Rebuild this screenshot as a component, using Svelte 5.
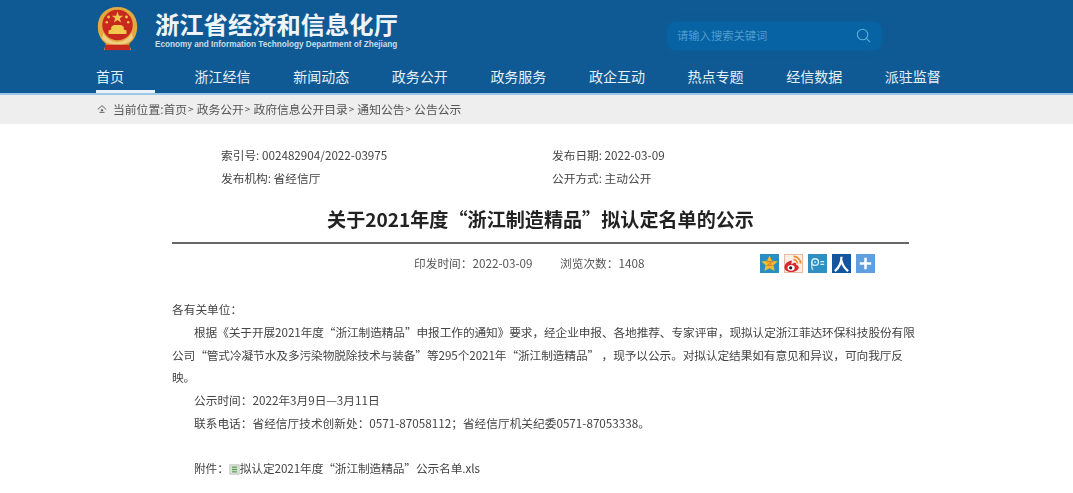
<script>
  const nav = ['首页', '浙江经信', '新闻动态', '政务公开', '政务服务', '政企互动', '热点专题', '经信数据', '派驻监督'];
  const crumbs = ['政务公开', '政府信息公开目录', '通知公告', '公告公示'];
</script>

<div class="page">
  <header class="top">
    <div class="brand-row">
      <svg class="emblem" viewBox="0 0 48 52" width="43" height="47">
        <path d="M24 1C11 1 2 10 2 23c0 9 4 15 9 19l-2 7h30l-2-7c5-4 9-10 9-19C46 10 37 1 24 1z" fill="#e2a93f" />
        <circle cx="24" cy="21" r="17" fill="#c8281e" />
        <path d="M24 6l1.600 4.600h4.900l-4 2.900 1.500 4.700-4-2.900-4 2.900 1.500-4.700-4-2.900h4.900z" fill="#f2c94c" />
        <circle cx="14" cy="12" r="1.600" fill="#f2c94c" />
        <circle cx="34" cy="12" r="1.600" fill="#f2c94c" />
        <circle cx="12" cy="18" r="1.400" fill="#f2c94c" />
        <circle cx="36" cy="18" r="1.400" fill="#f2c94c" />
        <path d="M14 31v-4l3-1v-3l3-2h8l3 2v3l3 1v4z" fill="#f2c94c" />
        <path d="M8 30c4 7 10 10 16 10s12-3 16-10l1 6c-4 5-10 7-17 7S11 41 7 36z" fill="#f0d080" />
        <rect x="10" y="43" width="28" height="6" fill="#c8281e" />
      </svg>
      <div class="brand">
        <div class="brand-cn">浙江省经济和信息化厅</div>
        <div class="brand-en">Economy and Information Technology Department of Zhejiang</div>
      </div>
      <div class="search">
        <span>请输入搜索关键词</span>
        <svg viewBox="0 0 16 16" width="15" height="15" fill="none" stroke="#5fb0dc" stroke-width="1.100">
          <circle cx="7" cy="7" r="5.600" />
          <path d="M11 11l4 4" />
        </svg>
      </div>
    </div>
    <nav class="menu">
      {#each nav as item, i}
        <a class:active={i === 0} href="#top">{item}</a>
      {/each}
    </nav>
  </header>

  <div class="crumbbar">
    <svg viewBox="0 0 12 12" width="10" height="10" fill="#444" stroke="#444" stroke-width="1">
      <path d="M1 6.500l5-4.500 5 4.500" fill="none" />
      <path d="M3 10h6" fill="none" />
      <circle cx="6" cy="7.500" r=".8" />
    </svg>
    <span class="here">当前位置:首页</span>
    {#each crumbs as c}
      <span class="sep">&gt;</span><span>{c}</span>
    {/each}
  </div>

  <main class="article">
    <div class="meta">
      <div>索引号: 002482904/2022-03975</div>
      <div>发布日期: 2022-03-09</div>
      <div>发布机构: 省经信厅</div>
      <div>公开方式: 主动公开</div>
    </div>
    <h1>关于2021年度“浙江制造精品”拟认定名单的公示</h1>
    <div class="info">
      <span class="date">印发时间：2022-03-09</span>
      <span class="views">浏览次数：1408</span>
      <div class="share">
        <svg viewBox="0 0 20 20" width="19" height="19">
          <rect width="20" height="20" fill="#2a8fc0" />
          <path d="M10 1.500l2.600 5.600 6 .7-4.500 4.100 1.300 6L10 15l-5.400 2.900 1.300-6L1.400 7.800l6-.7z" fill="#f0bb2e" />
          <path d="M7 8h6l-5 4h5" stroke="#d9822b" stroke-width="1.200" fill="none" />
        </svg>
        <svg viewBox="0 0 20 20" width="19" height="19">
          <rect x=".5" y=".5" width="19" height="19" fill="#fbeee6" stroke="#e3b9a0" />
          <path d="M7 7c-4 1-6.500 4-6.500 7 0 3 3 5 7 5s8-2 8-5c0-2-2-2.500-3-3 .5-2-1-3-5 0 1-3 1-5-.5-4z" fill="#d8262c" />
          <ellipse cx="7.500" cy="14.500" rx="3.800" ry="3" fill="#fff" />
          <circle cx="7" cy="14.500" r="1.700" fill="#222" />
          <path d="M10 2.500c4 0 7.500 3.500 7.500 7.500M10 6c2.200 0 4 1.800 4 4" stroke="#ef8a2b" stroke-width="1.800" fill="none" />
        </svg>
        <svg viewBox="0 0 20 20" width="19" height="19">
          <rect width="20" height="20" fill="#2f8fc0" />
          <circle cx="7.500" cy="8.500" r="3.500" fill="none" stroke="#d8f0fa" stroke-width="1.400" />
          <circle cx="7.500" cy="8.500" r="1" fill="#d8f0fa" />
          <path d="M4 8v6c0 1 .5 2 1.500 2.500" stroke="#d8f0fa" stroke-width="1.200" fill="none" />
          <path d="M13 8h4M13 11h4" stroke="#d8f0fa" stroke-width="1.400" />
        </svg>
        <svg viewBox="0 0 20 20" width="19" height="19">
          <rect width="20" height="20" fill="#15559e" />
          <path d="M10 3c0 6-2 11-7 15M10 7c1 5 3 8 7 11" stroke="#fff" stroke-width="2.400" fill="none" />
        </svg>
        <svg viewBox="0 0 20 20" width="19" height="19">
          <rect width="20" height="20" fill="#5f9fe0" />
          <path d="M10 4v12M4 10h12" stroke="#fff" stroke-width="2.600" />
        </svg>
      </div>
    </div>
    <div class="body">
      <p class="flush">各有关单位：</p>
      <p class="lines">根据《关于开展2021年度“浙江制造精品”申报工作的通知》要求，经企业申报、各地推荐、专家评审，现拟认定浙江菲达环保科技股份有限<br />公司“管式冷凝节水及多污染物脱除技术与装备”等295个2021年“浙江制造精品” ，现予以公示。对拟认定结果如有意见和异议，可向我厅反<br />映。</p>
      <p>公示时间：2022年3月9日—3月11日</p>
      <p>联系电话：省经信厅技术创新处：0571-87058112；省经信厅机关纪委0571-87053338。</p>
      <p class="blank">&nbsp;</p>
      <p class="attach">附件：<svg viewBox="0 0 12 12" width="11" height="11"><rect x="1" y="1" width="10" height="10" fill="#eef3ea" stroke="#b5b5b5" /><path d="M3 3.500h6M3 6h6M3 8.500h6" stroke="#4e9a4a" stroke-width="1.400" /></svg>拟认定2021年度“浙江制造精品”公示名单.xls</p>
    </div>
  </main>
</div>

<style>
  :global(body) {
    margin: 0;
    background: #fff;
    font-family: "Noto Sans CJK SC", "Liberation Sans", sans-serif;
    color: #333;
  }
  .page {
    filter: blur(0.35px);
  }
  .top {
    background: #0f5a94;
    border-bottom: 2px solid #9cc6e6;
    height: 93px;
    color: #fff;
    padding-left: 96px;
  }
  .brand-row {
    display: flex;
    align-items: flex-start;
    height: 61px;
    padding-top: 6px;
    box-sizing: border-box;
  }
  .emblem {
    margin-right: 16px;
  }
  .brand {
    width: 513px;
    padding-top: 3px;
  }
  .brand-cn {
    font-size: 24.3px;
    font-weight: 700;
    line-height: 29px;
    color: #eef4f9;
  }
  .brand-en {
    font-family: "Liberation Sans", sans-serif;
    font-size: 8.2px;
    font-weight: 700;
    line-height: 14px;
    color: #c9dcea;
    white-space: nowrap;
  }
  .search {
    width: 213px;
    height: 28px;
    margin-top: 16px;
    background: #0763a3;
    border-radius: 8px;
    box-shadow: 0 0 6px #0763a3;
    display: flex;
    align-items: center;
    justify-content: space-between;
    padding: 0 10px 2px 9px;
    box-sizing: border-box;
    font-size: 11.3px;
    color: #4f9ccc;
  }
  .menu {
    display: flex;
  }
  .menu a {
    width: 98.6px;
    height: 32px;
    box-sizing: border-box;
    flex: none;
    font-size: 14px;
    line-height: 30px;
    color: #e6f0f7;
    text-decoration: none;
    position: relative;
  }
  .menu a.active::after {
    content: "";
    position: absolute;
    left: 0;
    bottom: 0;
    width: 59px;
    height: 3px;
    background: #e8f2fa;
  }
  .crumbbar {
    background: #eeeeee;
    height: 29px;
    padding: 0 0 2px 97px;
    box-sizing: border-box;
    display: flex;
    align-items: center;
    font-size: 11.8px;
    color: #555;
  }
  .here {
    margin-left: 6px;
  }
  .sep {
    margin: 0 3px 0 1px;
    font-size: 10px;
  }
  .article {
    width: 737px;
    margin-left: 172px;
    font-size: 11.7px;
  }
  .meta {
    display: grid;
    grid-template-columns: 331px 1fr;
    grid-auto-rows: 23px;
    padding: 19px 0 0 49px;
    line-height: 23px;
    color: #444;
  }
  h1 {
    margin: 0;
    padding: 16px 0 9px;
    font-size: 19.1px;
    line-height: 28px;
    font-weight: 700;
    text-align: center;
    color: #222;
    border-bottom: 2px solid #666;
  }
  .info {
    display: flex;
    align-items: center;
    height: 37px;
    padding-left: 242px;
    color: #555;
  }
  .date {
    width: 146px;
  }
  .views {
    width: 200px;
  }
  .share {
    display: flex;
    gap: 5px;
    margin-top: 1px;
  }
  .body {
    margin-top: 17px;
    line-height: 22.800px;
    color: #444;
  }
  .body p {
    margin: 0;
    text-indent: 22px;
    white-space: nowrap;
  }
  .body p.flush {
    text-indent: 0;
  }
  .body p.lines {
    letter-spacing: -0.1px;
  }
  .body p.blank {
    line-height: 22px;
  }
  .attach {
    letter-spacing: -0.1px;
  }
  .attach svg {
    vertical-align: -2px;
  }
</style>
